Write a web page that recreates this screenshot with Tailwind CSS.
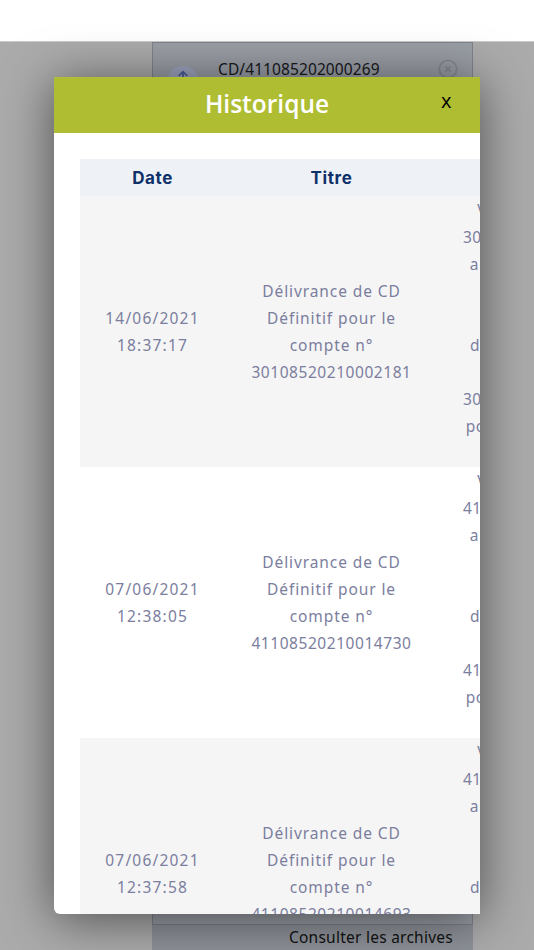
<!DOCTYPE html>
<html lang="fr">
<head>
    <meta charset="UTF-8">
    <meta name="viewport" content="width=device-width, initial-scale=1.0">
    <title>Historique</title>
    <script src="https://cdn.jsdelivr.net/npm/@tailwindcss/browser@4"></script>
</head>
<body class="relative w-[534px] h-[950px] overflow-hidden bg-white font-['Noto_Sans',sans-serif] tracking-[0.55px]">

    <!-- page behind the dialog -->
    <div class="h-[41px] bg-white"></div>
    <div class="h-[909px] bg-[#ababab] border-t border-[#c9c9c9] pl-[152px]">
        <div class="w-[321px] h-[883px] bg-[#9a9ea5] border border-[#7e838c] flex items-start pt-[15px] pl-[14px] pr-[13px]">
            <div class="w-[32px] h-[32px] mt-[8px] rounded-full bg-[#9ea5bf] flex justify-center pt-[3px] shrink-0">
                <svg viewBox="0 0 16 16" class="w-[14px] h-[14px] text-[#4a5a9c]" fill="none" stroke="currentColor" stroke-width="2"><path d="M3 8l5-5 5 5M8 4v8"></path></svg>
            </div>
            <div class="ml-[19px] flex-1 text-[15.5px] tracking-[0.1px] leading-[22px] text-[#17191c]">CD/411085202000269</div>
            <svg viewBox="0 0 24 24" class="w-[22px] h-[22px] text-[#878b92]" fill="none" stroke="currentColor" stroke-width="2"><circle cx="12" cy="12" r="9.5"></circle><path d="M9 9l6 6M15 9l-6 6"></path></svg>
        </div>
        <div class="w-[321px] h-[26px] bg-[#8e9299] text-[15.5px] tracking-[0.25px] leading-[24px] text-[#111] text-right pr-[20px]">Consulter les archives</div>
    </div>

    <!-- dialog -->
    <div class="absolute left-[54px] top-[77px] w-[426px] h-[837px] bg-white rounded-bl-[6px] overflow-hidden shadow-[0_5px_50px_rgba(0,0,0,0.55)]">
        <div class="relative h-[56px] bg-[#afbd33] flex items-center justify-center pb-[2px]">
            <h1 class="text-white text-[24.5px] tracking-normal font-semibold font-['Open_Sans',sans-serif]">Historique</h1>
            <button class="absolute left-[387px] top-[9px] text-black text-[20px] tracking-normal font-['Open_Sans',sans-serif]">x</button>
        </div>
        <div class="pt-[26px] pl-[26px]">
            <table class="w-[568px] table-fixed border-collapse text-center text-[15.5px] leading-[27px] text-[#7b7e9e]">
                <colgroup>
                    <col class="w-[145px]">
                    <col class="w-[213px]">
                    <col class="w-[210px]">
                </colgroup>
                <thead class="bg-[#eef2f7] text-[#0f3068] font-['Inter',sans-serif] text-[17px] font-extrabold">
                    <tr class="h-[37px]"><th class="pt-[1px] tracking-[0.6px]">Date</th><th class="pt-[1px] tracking-[0.6px]">Titre</th><th></th></tr>
                </thead>
                <tbody>
                    <tr class="h-[271px] bg-[#f5f5f5]">
                        <td class="tracking-[1.2px]">14/06/2021<br>18:37:17</td>
                        <td class="px-[20px]"><span class="tracking-[0.9px]">Délivrance de CD Définitif pour le compte n°</span><br>30108520210002181</td>
                        <td>Votre compte CD<br>30108520210002181<br>a été clôturé avec :<br>&nbsp;<br>&nbsp;<br>d'un montant total<br>&nbsp;<br>30108520210002181<br>pour une durée de :<br>&nbsp;</td>
                    </tr>
                    <tr class="h-[271px] bg-white">
                        <td class="tracking-[1.2px]">07/06/2021<br>12:38:05</td>
                        <td class="px-[20px]"><span class="tracking-[0.9px]">Délivrance de CD Définitif pour le compte n°</span><br>41108520210014730</td>
                        <td>Votre compte CD<br>41108520210014730<br>a été clôturé avec :<br>&nbsp;<br>&nbsp;<br>d'un montant total<br>&nbsp;<br>41108520210014730<br>pour une durée de :<br>&nbsp;</td>
                    </tr>
                    <tr class="h-[271px] bg-[#f5f5f5]">
                        <td class="tracking-[1.2px]">07/06/2021<br>12:37:58</td>
                        <td class="px-[20px]"><span class="tracking-[0.9px]">Délivrance de CD Définitif pour le compte n°</span><br>41108520210014693</td>
                        <td>Votre compte CD<br>41108520210014693<br>a été clôturé avec :<br>&nbsp;<br>&nbsp;<br>d'un montant total<br>&nbsp;<br>41108520210014693<br>pour une durée de :<br>&nbsp;</td>
                    </tr>
                </tbody>
            </table>
        </div>
    </div>

</body>
</html>
